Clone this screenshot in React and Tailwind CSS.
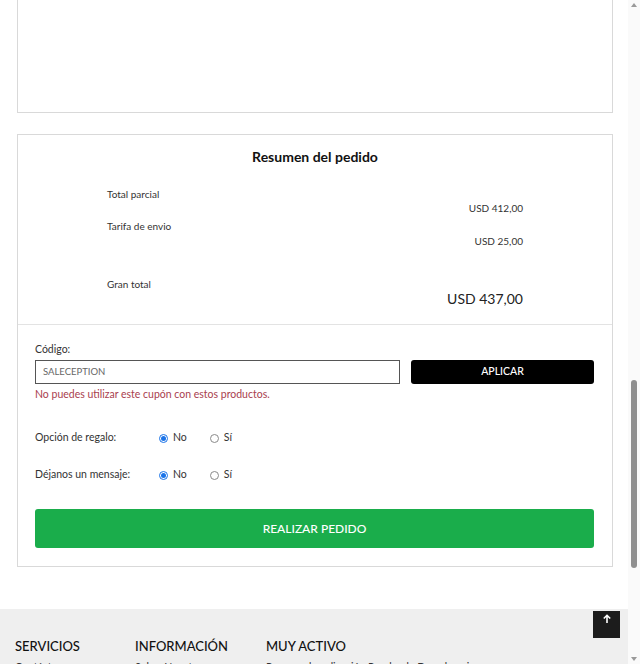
import React from "react";

const font = { fontFamily: "Lato, 'Noto Sans', sans-serif" };

function Radio({ checked, label }) {
  return (
    <label className="flex items-center gap-[5px] text-[10.5px] text-[#333]">
      <span
        className={`flex h-[9px] w-[9px] items-center justify-center rounded-full border ${
          checked ? "border-[#1a73e8]" : "border-[#8a8a8a]"
        } bg-white`}
      >
        {checked && <span className="h-[5px] w-[5px] rounded-full bg-[#1a73e8]" />}
      </span>
      {label}
    </label>
  );
}

function OptionRow({ label }) {
  return (
    <div className="flex h-[20px] items-center">
      <span className="w-[124px] text-[10.5px] text-[#333]">{label}</span>
      <div className="flex items-center gap-[23px]">
        <Radio checked label="No" />
        <Radio label="Sí" />
      </div>
    </div>
  );
}

function Scrollbar() {
  return (
    <div className="flex h-[664px] w-[12px] flex-col items-center bg-[#fafafa]">
      <div className="mt-[3px] h-0 w-0 border-x-[3px] border-b-[4px] border-x-transparent border-b-[#9a9a9a]" />
      <div className="mt-[373px] h-[188px] w-[6px] rounded-full bg-[#8f8f8f]" />
      <div className="mt-auto mb-[3px] h-0 w-0 border-x-[3px] border-t-[4px] border-x-transparent border-t-[#9a9a9a]" />
    </div>
  );
}

export default function App() {
  return (
    <div className="flex h-[664px] w-[640px] overflow-hidden bg-white" style={font}>
      <div className="relative w-[628px] overflow-hidden">
        {/* previous card, top scrolled off */}
        <div className="ml-[17px] h-[113px] w-[596px] border-x border-b border-[#d9d9d9]" />

        {/* order summary */}
        <div className="ml-[17px] mt-[21px] w-[596px] border border-[#d9d9d9]">
          <div className="px-[89px] pb-[15px] pt-[13px]">
            <h2 className="text-center text-[14px] font-bold leading-[18px] text-[#111]">
              Resumen del pedido
            </h2>
            <div className="mt-[21px] text-[10px] leading-[14px] text-[#333]">
              <p>Total parcial</p>
              <p className="text-right">USD 412,00</p>
              <p className="mt-[4px]">Tarifa de envio</p>
              <p className="mt-px text-right">USD 25,00</p>
              <p className="mt-[29px]">Gran total</p>
              <p className="-mt-[2px] text-right text-[14px] leading-[20px] text-[#222]">
                USD 437,00
              </p>
            </div>
          </div>

          <div className="border-t border-[#e3e3e3] pb-[18px] pl-[17px] pr-[18px] pt-[17px]">
            <p className="text-[10.5px] leading-[14px] text-[#333]">Código:</p>
            <div className="mt-[4px] flex gap-[11px]">
              <div className="flex h-[24px] flex-1 items-center border border-[#555] px-[7px] text-[9.5px] text-[#666]">
                SALECEPTION
              </div>
              <button className="h-[24px] w-[183px] rounded-[3px] bg-black text-[10.5px] font-medium text-white">
                APLICAR
              </button>
            </div>
            <p className="mt-[3px] text-[10.5px] leading-[14px] text-[#a9404e]">
              No puedes utilizar este cupón con estos productos.
            </p>

            <div className="mt-[27px] flex flex-col gap-[17px]">
              <OptionRow label="Opción de regalo:" />
              <OptionRow label="Déjanos un mensaje:" />
            </div>

            <button className="mt-[24px] h-[39px] w-full rounded-[3px] bg-[#1aad4b] text-[12px] font-medium text-white">
              REALIZAR PEDIDO
            </button>
          </div>
        </div>

        {/* footer */}
        <footer className="mt-[42px] h-[200px] bg-[#efefef] pl-[15px] pt-[28px]">
          <div className="flex">
            <div className="w-[120px]">
              <h3 className="text-[13px] font-medium leading-[18px] text-[#111]">SERVICIOS</h3>
              <p className="mt-[5px] text-[10.5px] text-[#333]">Contáctanos</p>
            </div>
            <div className="w-[131px]">
              <h3 className="text-[13px] font-medium leading-[18px] text-[#111]">INFORMACIÓN</h3>
              <p className="mt-[5px] text-[10.5px] text-[#333]">Sobre Nosotros</p>
            </div>
            <div>
              <h3 className="text-[13px] font-medium leading-[18px] text-[#111]">MUY ACTIVO</h3>
              <p className="mt-[5px] text-[10.5px] text-[#333]">
                Proceso de aplicación Prueba de Degaderacion
              </p>
            </div>
          </div>
        </footer>

        <button className="absolute left-[593px] top-[611px] flex h-[27px] w-[27px] items-start justify-center bg-[#1c1c1c] pt-[3px] text-white">
          <svg width="10" height="10" viewBox="0 0 10 10" fill="none" stroke="white" strokeWidth="1.6">
            <path d="M5 9V1.5M1.8 4.5L5 1.3l3.2 3.2" />
          </svg>
        </button>
      </div>
      <Scrollbar />
    </div>
  );
}
